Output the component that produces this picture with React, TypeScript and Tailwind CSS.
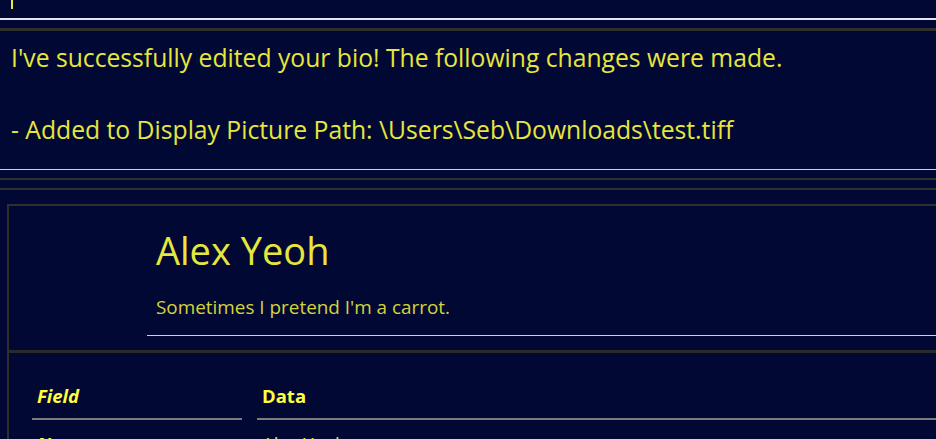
export default function App() {
  const font = { fontFamily: '"Open Sans", "Noto Sans", sans-serif' };
  return (
    <div className="w-[936px] h-[439px] overflow-hidden bg-[#000833] text-[#e6e63c]" style={font}>
      <div className="h-[18px] pl-[11px]">
        <div className="w-[2px] h-[9px] bg-[#e6e63c]" />
      </div>
      <div className="h-[2px] bg-[#e4e4ea]" />
      <div className="h-[8px]" />
      <div className="h-[3px] bg-[#2f2f2c]" />
      <div className="pl-[11px] pt-[9px] text-[24.7px] leading-[36px] whitespace-nowrap">
        <p>I've successfully edited your bio! The following changes were made.</p>
        <p className="mt-[36px]">- Added to Display Picture Path: \Users\Seb\Downloads\test.tiff</p>
      </div>
      <div className="h-[21px]" />
      <div className="h-[1px] bg-[#d0d0dc]" />
      <div className="h-[8px]" />
      <div className="h-[2px] bg-[#2f2f2c]" />
      <div className="h-[8px]" />
      <div className="h-[2px] bg-[#2f2f2c]" />
      <div className="h-[14px]" />
      <div className="ml-[7px] border-l-2 border-t-2 border-[#2f2f2c]">
        <div className="pl-[147px] pt-[20px]">
          <h1 className="text-[38px] leading-[48px] text-[#e6e63c]">Alex Yeoh</h1>
          <p className="mt-[21px] text-[18.9px] leading-[24px] text-[#d4d43a]">Sometimes I pretend I'm a carrot.</p>
        </div>
        <div className="ml-[138px] mt-[16px] h-[1px] bg-[#d0d0dc]" />
        <div className="h-[14px]" />
        <div className="h-[3px] bg-[#2a2a28]" />
        <div className="pl-[23px] pt-[31px] grid grid-cols-[210px_1fr] gap-x-[15px]">
          <div className="border-b-2 border-[#7c7c7c] pb-[10px] pl-[5px] text-[18.5px] leading-[24px] font-bold italic text-[#ffff3a]">Field</div>
          <div className="border-b-2 border-[#7c7c7c] pb-[10px] pl-[5px] text-[18.5px] leading-[24px] font-bold text-[#ffff3a]">Data</div>
          <div className="pt-[12px] pl-[5px] text-[18.5px] leading-[24px] font-bold italic text-[#ffff3a]">Name</div>
          <div className="pt-[12px] pl-[5px] text-[18.5px] leading-[24px] text-[#e6e63c]">Alex Yeoh</div>
        </div>
      </div>
    </div>
  );
}
